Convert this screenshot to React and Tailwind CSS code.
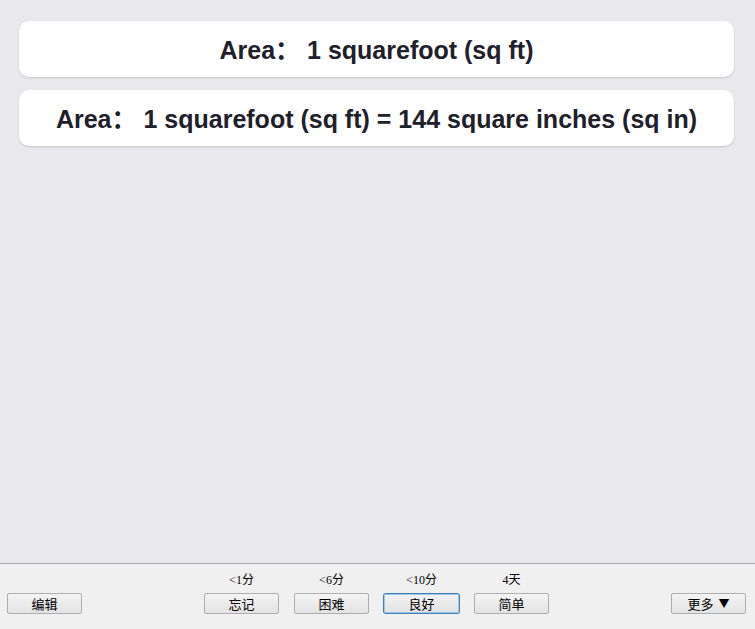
export default function App() {
  const cardText =
    "font-['Liberation_Sans','Noto_Sans_CJK_SC',sans-serif] font-bold text-[25px] text-[#20202a] leading-none pt-[2px]";
  const btn =
    "w-[75px] h-[21px] flex items-center justify-center rounded-[2px] border border-[#adadad] bg-gradient-to-b from-[#f4f4f4] to-[#e3e3e3] text-[13px] text-black leading-none font-['Noto_Sans_CJK_SC',sans-serif]";
  const btnFocus =
    "w-[75px] h-[19px] my-[1px] flex items-center justify-center rounded-[2px] border border-[#9cc8ee] shadow-[0_0_0_1px_#3c7fb1] bg-gradient-to-b from-[#f2f2f2] to-[#e3e3e3] text-[13px] text-black leading-none font-['Noto_Sans_CJK_SC',sans-serif]";
  const label =
    "h-[14px] flex items-center justify-center text-[12px] text-black leading-none font-['Liberation_Serif','Noto_Sans_CJK_SC',serif]";
  const items = [
    { l: "<1分", b: "忘记" },
    { l: "<6分", b: "困难" },
    { l: "<10分", b: "良好", focus: true },
    { l: "4天", b: "简单" },
  ];
  return (
    <div className="h-[629px] w-[755px] flex flex-col bg-[#e9e9ed] overflow-hidden">
      <div className="flex-1 flex flex-col gap-[13px] pt-[21px] pl-[19px] pr-[21px]">
        <div className="h-[56px] rounded-[10px] bg-white shadow-[0_1px_2px_rgba(0,0,0,0.15)] flex items-center justify-center">
          <span className={cardText}>Area： 1 squarefoot (sq ft)</span>
        </div>
        <div className="h-[56px] rounded-[10px] bg-white shadow-[0_1px_2px_rgba(0,0,0,0.15)] flex items-center justify-center">
          <span className={cardText}>Area： 1 squarefoot (sq ft) = 144 square inches (sq in)</span>
        </div>
      </div>
      <div className="h-[66px] border-t border-[#a9a9a9] bg-[#f0f0f0] grid grid-cols-[1fr_auto_1fr] items-end pb-[15px]">
        <div className="pl-[7px]">
          <div className={btn}>编辑</div>
        </div>
        <div className="flex gap-[15px] items-end pr-[2px]">
          {items.map((it) => (
            <div key={it.b} className="flex flex-col items-center gap-[6px]">
              <div className={label}>{it.l}</div>
              <div className={it.focus ? btnFocus : btn}>{it.b}</div>
            </div>
          ))}
        </div>
        <div className="flex justify-end pr-[9px]">
          <div className={btn}>
            <span>更多</span>
            <span className="ml-[5px] text-[11px]">▼</span>
          </div>
        </div>
      </div>
    </div>
  );
}
